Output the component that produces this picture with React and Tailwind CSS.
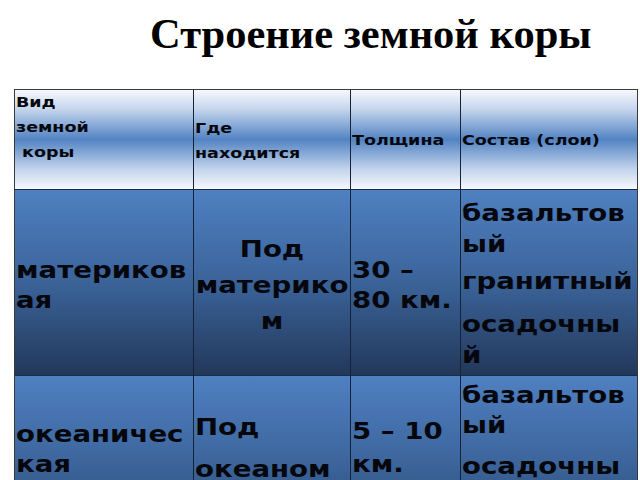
export default function App() {
  const hdr =
    "bg-[linear-gradient(to_bottom,#f6f8fc_0%,#c3d4ec_20%,#5283c2_50%,#c3d4ec_80%,#f6f8fc_100%)]";
  const body = "bg-[linear-gradient(to_bottom,#4f80c1_0%,#3b6399_50%,#22385a_100%)]";
  const b = "border-r border-[#15233a]";
  const ht = "text-[14px] leading-[25px] pl-[1px] whitespace-nowrap [&>div]:origin-left [&>div]:scale-x-[1.25]";
  const bt = "text-[23px] whitespace-nowrap [&>div]:origin-left [&>div]:scale-x-[1.2]";
  const btc = "text-[23px] whitespace-nowrap text-center [&>div]:origin-center [&>div]:scale-x-[1.2]";
  return (
    <div className="w-[640px] h-[480px] overflow-hidden bg-white relative">
      <div className="pl-[150px] pt-[10px] h-[89px] text-[42.5px] leading-[48px] font-bold text-black [font-family:'Liberation_Serif',serif]">
        Строение земной коры
      </div>
      <div className="ml-[14px] w-[624px] border-l border-t border-r border-[#3a3a3a] grid grid-cols-[179px_157px_110px_176px] text-[#05070d] [font-family:'DejaVu_Sans',sans-serif] font-bold">
        {/* header */}
        <div className={`h-[99px] ${hdr} ${b} ${ht}`}>
          <div>Вид</div>
          <div>земной</div>
          <div>&nbsp;коры</div>
        </div>
        <div className={`h-[99px] ${hdr} ${b} ${ht} pt-[26px]`}>
          <div>Где</div>
          <div>находится</div>
        </div>
        <div className={`h-[99px] ${hdr} ${b} ${ht} pt-[38px]`}>
          <div>Толщина</div>
        </div>
        <div className={`h-[99px] ${hdr} ${ht} pt-[38px]`}>
          <div>Состав (слои)</div>
        </div>

        {/* row 1 */}
        <div className={`h-[186px] ${body} ${b} border-t border-t-[#1c2c44] ${bt} leading-[30px] pt-[65px] pl-[1px]`}>
          <div>материков</div>
          <div>ая</div>
        </div>
        <div className={`h-[186px] ${body} ${b} border-t border-t-[#1c2c44] ${btc} leading-[36px] pt-[41px]`}>
          <div>Под</div>
          <div>материко</div>
          <div>м</div>
        </div>
        <div className={`h-[186px] ${body} ${b} border-t border-t-[#1c2c44] ${bt} leading-[30px] pt-[65px] pl-[1px]`}>
          <div>30 –</div>
          <div>80 км.</div>
        </div>
        <div className={`h-[186px] ${body} border-t border-t-[#1c2c44] ${bt} leading-[31px] pt-[8px] pl-[1px]`}>
          <div>базальтов</div>
          <div>ый</div>
          <div className="mt-[6px]">гранитный</div>
          <div className="mt-[12px]">осадочны</div>
          <div>й</div>
        </div>

        {/* row 2 */}
        <div className={`h-[186px] ${body} ${b} border-t border-t-[#1c2c44] ${bt} leading-[30px] pt-[43px] pl-[1px]`}>
          <div>океаничес</div>
          <div>кая</div>
        </div>
        <div className={`h-[186px] ${body} ${b} border-t border-t-[#1c2c44] ${bt} leading-[42px] pt-[30px] pl-[1px]`}>
          <div>Под</div>
          <div>океаном</div>
        </div>
        <div className={`h-[186px] ${body} ${b} border-t border-t-[#1c2c44] ${bt} leading-[33px] pt-[39px] pl-[1px]`}>
          <div>5 – 10</div>
          <div>км.</div>
        </div>
        <div className={`h-[186px] ${body} border-t border-t-[#1c2c44] ${bt} leading-[30px] pt-[4px] pl-[1px]`}>
          <div>базальтов</div>
          <div>ый</div>
          <div className="mt-[11px]">осадочны</div>
          <div>й</div>
        </div>
      </div>
    </div>
  );
}
